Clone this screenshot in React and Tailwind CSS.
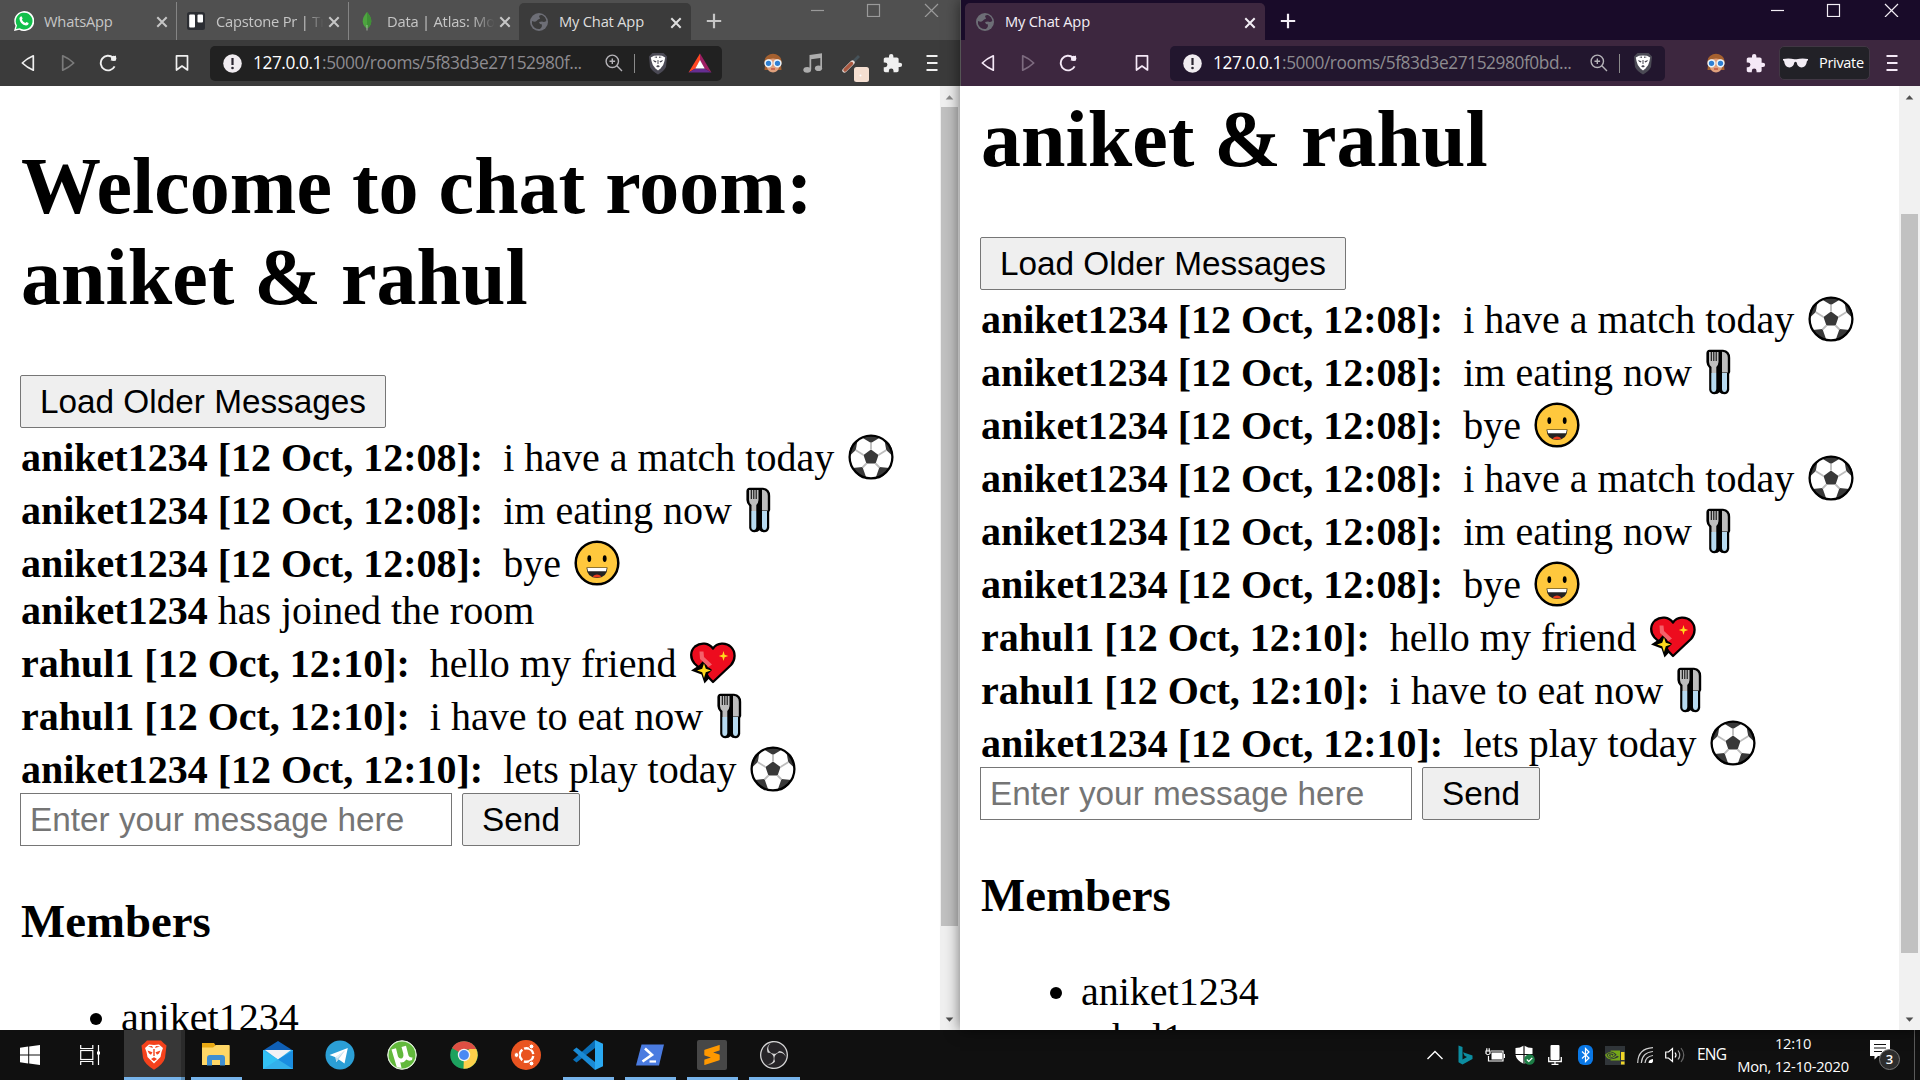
import React from "react";
import { SiNvidia, SiObsstudio, SiSublimetext } from "react-icons/si";

const ui = "font-['Open_Sans','Noto_Sans',sans-serif]";

/* ---------- message pictograms ---------- */

function Ball() {
  return (
    <svg className="ml-[4px] h-[46px] w-[46px]" viewBox="0 0 46 46">
      <circle cx="23" cy="23" r="21.5" fill="#fff" />
      <g fill="#383838">
        <path d="M23 15.5 L30.5 21 L27.6 29.5 H18.4 L15.5 21 Z" />
        <path d="M14 3.5 L23 9 L32 3.5 Q23 -.5 14 3.5Z" />
        <path d="M1.5 22 L7.8 16 L9.500 6 L5 9 Q1 15 1.5 22Z" />
        <path d="M44.5 22 L38.2 16 L36.500 6 L41 9 Q45 15 44.5 22Z" />
        <path d="M4.500 34 L14.5 33 L18 43 L15 44.500 Q8 41 4.500 34Z" />
        <path d="M41.500 34 L31.5 33 L28 43 L31 44.500 Q38 41 41.500 34Z" />
      </g>
      <g stroke="#bdbdbd" strokeWidth="1.8" fill="none">
        <path d="M23 15.5 V8.6 M30.5 21 L38.5 16 M27.6 29.5 L31.5 33.5 M18.4 29.5 L14.5 33.5 M15.5 21 L7.5 16" />
      </g>
      <circle cx="23" cy="23" r="21.4" fill="none" stroke="#000" strokeWidth="2.3" />
    </svg>
  );
}

function Fork() {
  return (
    <svg className="ml-[4px] h-[46px] w-[25px]" viewBox="0 0 25 46">
      <path d="M3.5 .8 H17 Q24.2 1.5 24.2 9 V23 L23.2 25 V41 Q22 45.3 18.5 45.3 Q15 45.3 13.5 43.3 Q12 45.3 8.5 45.3 Q4 45 3.2 41 V19 Q.4 16 .4 13 V4 Q.6 1 3.5 .8Z" fill="#000" />
      <path d="M3 3 H12.5 V13 Q12.3 16 10.3 18 V24 H5.5 V18 Q3 16 3 13Z" fill="#bdbdbd" />
      <path d="M5.3 2.5 V12 M7.8 2.5 V12 M10.2 2.5 V12" stroke="#000" strokeWidth="1" />
      <path d="M5.3 24 H10.3 V40 Q10 43 7.8 43 Q5.4 43 5.3 40Z" fill="#b7daf0" />
      <path d="M16 2.8 Q21.8 3 21.8 9 V23.5 H16Z" fill="#bdbdbd" />
      <path d="M16 24 H21 V40 Q20.6 43 18.5 43 Q16.2 43 16 40Z" fill="#b7daf0" />
    </svg>
  );
}

function Smile() {
  return (
    <svg className="ml-[3px] h-[46px] w-[46px]" viewBox="0 0 46 46">
      <circle cx="23" cy="23" r="21.3" fill="#ffc83d" stroke="#000" strokeWidth="2.5" />
      <ellipse cx="15.3" cy="18.6" rx="1.9" ry="3.4" />
      <ellipse cx="30.7" cy="18.6" rx="1.9" ry="3.4" />
      <path d="M12.5 27.5 H33.5 Q33 38 23 38 Q13 38 12.5 27.5Z" fill="#222" />
      <path d="M13.3 28 H32.7 L32 31.3 H14Z" fill="#fff" />
      <path d="M18.5 36.5 Q23 32.5 27.5 36.5 Q23 38.6 18.5 36.5Z" fill="#e63b1e" />
    </svg>
  );
}

function Heart() {
  return (
    <svg className="ml-[4px] h-[46px] w-[46px]" viewBox="0 0 46 46">
      <path d="M23 8.5 C27 2.5 36 2 41 7 C46 12 45.5 20 41 25 L23 42 L12.500 31 L4.500 23.500 C0 18.500 0 11 5 6.500 C11 1.800 19 3 23 8.500Z" fill="#ed0c1e" stroke="#000" strokeWidth="2.3" strokeLinejoin="round" />
      <path d="M1 30.500 L9.500 25 L14.500 19 L17.500 27 L25 30.500 L18 34 L19.500 38 L14.500 43.500 L11.500 34.500Z" fill="#000" />
      <path d="M16 24 L22 30 L18 34 L22 38 L30 32 L20 24Z" fill="#ed0c1e" />
      <path d="M14 23.500 L15.800 28.800 L21 30.500 L15.800 32.300 L14 38 L12.200 32.300 L7 30.500 L12.200 28.800Z" fill="#ffd91c" />
      <path d="M33.500 11 L34.600 14.700 L38.200 16 L34.600 17.200 L33.500 21 L32.400 17.200 L28.800 16 L32.400 14.700Z" fill="#ffd91c" />
      <path d="M9.500 11.500 L13.500 11.500 L14 17 L22 24.500 L18.500 27 L10 19Z" fill="#f4616a" />
    </svg>
  );
}

const EMOJI = { ball: Ball, fork: Fork, smile: Smile, heart: Heart };

/* ---------- chat page ---------- */

function Message({ user, time, text, emoji }) {
  if (!time) {
    return (
      <p className="h-[47px] pt-px pl-px leading-[46px] whitespace-pre">
        <b>{user}</b> {text}
      </p>
    );
  }
  const Icon = EMOJI[emoji];
  return (
    <div className="flex h-[53px] items-start pt-[6px] pl-px">
      <p className="pt-px leading-[46px] whitespace-pre">
        <b>{`${user} [${time}]:`}</b>
        {`\u00a0 ${text} `}
      </p>
      <Icon />
    </div>
  );
}

function ChatPage({ messages, members, scrolled }) {
  return (
    <div className="min-w-0 flex-1 overflow-hidden bg-white text-black font-['Liberation_Serif',serif] text-[40px]">
      <div className="px-5">
        {scrolled ? (
          <h1 className="h-[151px] pt-[8px] pl-px text-[80px] leading-[91px] font-bold">aniket &amp; rahul</h1>
        ) : (
          <h1 className="h-[289px] pt-[55px] pl-px text-[80px] leading-[91px] font-bold">
            Welcome to chat room: aniket &amp; rahul
          </h1>
        )}
        <button className="block h-[53px] w-[366px] rounded-[2px] border border-[#767676] bg-[#efefef] font-['Liberation_Sans',sans-serif] text-[33.33px] leading-[50px] whitespace-nowrap">
          Load Older Messages
        </button>
        {messages.map((m, i) => (
          <Message key={i} {...m} />
        ))}
        <div className="flex gap-[10px] font-['Liberation_Sans',sans-serif] text-[33.33px]">
          <input
            className="h-[53px] w-[432px] border border-[#767676] px-[9px] placeholder:text-[#757575] placeholder:opacity-100"
            placeholder="Enter your message here"
          />
          <button className="h-[53px] w-[118px] rounded-[2px] border border-[#767676] bg-[#efefef] leading-[50px]">Send</button>
        </div>
        <h3 className="mt-[48px] pl-px text-[46.8px] leading-[54px] font-bold">Members</h3>
        <ul className="mt-[47px] list-disc pl-[101px] leading-[46px]">
          {members.map((m) => (
            <li key={m}>{m}</li>
          ))}
        </ul>
      </div>
    </div>
  );
}

function Arrow({ up, color }) {
  return (
    <svg className="h-[21px] w-full shrink-0" viewBox="0 0 20 21" fill={color}>
      {up ? <path d="M5.500 14 L10 9 L14.500 14Z" /> : <path d="M5.500 8 L10 13 L14.500 8Z" />}
    </svg>
  );
}

/* ---------- browser chrome ---------- */

function Close() {
  return (
    <svg className="mt-[2px] h-[12px] w-[12px] shrink-0" viewBox="0 0 12 12" stroke="currentColor" strokeWidth="2">
      <path d="M1.300 1.300 L10.700 10.700 M10.700 1.300 L1.300 10.700" />
    </svg>
  );
}

function Globe({ land }) {
  return (
    <svg className="h-[18px] w-[18px]" viewBox="0 0 18 18">
      <circle cx="9" cy="9" r="9" fill="#6d6e76" />
      <path d="M2 8 Q5 9.500 6.500 8 Q8 6 10 5.800 L9 3 Q10 1.800 12 2 Q16 4 16.300 8 Q14 9.500 12 8.500 L9 9 Q9.500 11.500 12 11.500 Q12.500 14 10 16 Q4 16.500 2 11Z" fill={land} />
    </svg>
  );
}

function Trello() {
  return (
    <svg className="h-[18px] w-[18px]" viewBox="0 0 18 18">
      <rect width="18" height="18" rx="2.500" fill="#2c2e33" />
      <rect x="2.200" y="2.500" width="5.800" height="13" rx="1" fill="#fff" />
      <rect x="10.500" y="2.500" width="5.500" height="8" rx="1" fill="#fff" />
    </svg>
  );
}

function Leaf() {
  return (
    <svg className="h-[20px] w-[18px]" viewBox="0 0 18 20">
      <path d="M9 1 Q13.500 6 13.300 10.500 Q13 15 9 17.500 Q5 15 4.700 10.500 Q4.500 6 9 1Z" fill="#4da53f" />
      <path d="M9 1 Q13.500 6 13.300 10.500 Q13 15 9 17.500Z" fill="#3f9136" />
      <path d="M9 14 V19.500" stroke="#b7c9b2" strokeWidth=".8" />
    </svg>
  );
}

function Whatsapp() {
  return (
    <svg className="h-[20px] w-[20px]" viewBox="0 0 20 20">
      <path d="M0 20 L1.500 14.800 A10 10 0 1 1 5.300 18.700Z" fill="#fff" />
      <path d="M1.900 18.100 L3 14.500 A8.400 8.400 0 1 1 5.700 17.200Z" fill="#12c04b" />
      <path d="M6.800 5.500 Q7.500 5 8 6 L8.600 7.600 L7.900 8.800 Q9 11 11.300 11.900 L12.500 10.900 L14.600 12 Q14.700 14.400 12 14.500 Q6 13.500 5.400 7.500 Q5.600 6 6.800 5.500Z" fill="#fff" />
    </svg>
  );
}

function Plus() {
  return (
    <svg className="h-[16px] w-[16px]" viewBox="0 0 16 16" stroke="currentColor" strokeWidth="2.200">
      <path d="M8 .8 V15.200 M.8 8 H15.200" />
    </svg>
  );
}

function WindowButtons({ className }) {
  return (
    <div className={className}>
      <svg className="h-[14px] w-[130px]" viewBox="0 0 130 14" fill="none" stroke="currentColor" strokeWidth="1.200">
        <path d="M1 7.500 H14" />
        <rect x="57.500" y="1.500" width="12" height="12" />
        <path d="M115 1 L128 14 M128 1 L115 14" />
      </svg>
    </div>
  );
}

function Slot({ children, className = "w-10" }) {
  return <div className={`flex h-full shrink-0 items-center justify-center ${className}`}>{children}</div>;
}

function NavIcons() {
  return (
    <>
      <Slot>
        <svg className="h-[18px] w-[14px]" viewBox="0 0 14 18" fill="none" stroke="currentColor" strokeWidth="1.700" strokeLinejoin="round">
          <path d="M12.300 1.800 V16.200 Q6 13.500 1.300 9 Q6 4.500 12.300 1.800Z" />
        </svg>
      </Slot>
      <Slot>
        <svg className="h-[18px] w-[14px] opacity-35" viewBox="0 0 14 18" fill="none" stroke="currentColor" strokeWidth="1.700" strokeLinejoin="round">
          <path d="M1.700 1.800 V16.200 Q8 13.500 12.700 9 Q8 4.500 1.700 1.800Z" />
        </svg>
      </Slot>
      <Slot>
        <svg className="h-[18px] w-[18px]" viewBox="0 0 18 18" fill="none" stroke="currentColor" strokeWidth="1.900">
          <path d="M15.600 12.300 A7.300 7.300 0 1 1 14 3.700" />
          <path d="M11.500 6.500 H17 V1.500 L14 3 Z" fill="currentColor" stroke="none" />
          <circle cx="14.700" cy="4.300" r="2.600" fill="currentColor" stroke="none" />
        </svg>
      </Slot>
      <Slot className="ml-[34px] w-10">
        <svg className="h-[18px] w-[14px]" viewBox="0 0 14 18" fill="none" stroke="currentColor" strokeWidth="1.700">
          <path d="M1.500 1.800 H12.500 V16 L7 12 L1.500 16Z" strokeLinejoin="round" />
        </svg>
      </Slot>
    </>
  );
}

function Info() {
  return (
    <svg className="h-[19px] w-[19px] shrink-0" viewBox="0 0 19 19">
      <circle cx="9.500" cy="9.500" r="9.300" fill="#f0ecf0" />
      <path d="M9.500 4 V11" stroke="#2a2630" strokeWidth="2.200" />
      <circle cx="9.500" cy="14" r="1.300" fill="#2a2630" />
    </svg>
  );
}

function Magnifier() {
  return (
    <svg className="h-[18px] w-[18px]" viewBox="0 0 18 18" fill="none" stroke="#b5b3b8" strokeWidth="1.400">
      <circle cx="7.300" cy="7.300" r="6.200" />
      <path d="M11.800 11.800 L17 17 M7.300 4.500 V10.100 M4.500 7.300 H10.100" />
    </svg>
  );
}

function Shield() {
  return (
    <svg className="h-[23px] w-[20px]" viewBox="0 0 20 23">
      <path d="M4.500 1 L15.500 1 L19 4.500 L18 15 Q16 19 10 22.500 Q4 19 2 15 L1 4.500Z" fill="#4b4a55" />
      <path d="M10 3.500 L14 3.800 L17.200 5.500 L16.500 9 L15.200 13 L12.500 16.500 L10 18.500 L7.500 16.500 L4.800 13 L3.500 9 L2.800 5.500 L6 3.800Z" fill="#fff" />
      <path d="M5 8 L8.500 9.200 L7.800 10.500 L6 9.800Z M15 8 L11.500 9.200 L12.200 10.500 L14 9.800Z M8 14.200 L10 13 L12 14.200 L10 15.500Z M9.500 8 H10.500 V12 H9.500Z M6 5 L9 6 V4.500Z M14 5 L11 6 V4.500Z" fill="#4b4a55" />
    </svg>
  );
}

function Bat() {
  return (
    <svg className="h-[20px] w-[24px]" viewBox="0 0 24 20">
      <path d="M12 .5 L.5 19.500 L7.500 15.500 L12 7.500Z" fill="#ff4724" />
      <path d="M12 .5 L23.500 19.500 L16.500 15.500 L12 7.500Z" fill="#9e1f63" />
      <path d="M.5 19.500 H23.500 L16.500 15.500 H7.500Z" fill="#662d91" />
      <path d="M12 7 L7.300 15.500 H16.700Z" fill="#fff" />
    </svg>
  );
}

function Goggles() {
  return (
    <svg className="h-[20px] w-[20px]" viewBox="0 0 20 20">
      <path d="M2 12 Q0 6 4 3 Q10 -1.500 16 3 Q20 6 18 12 L18.500 17 H1.500Z" fill="#a5602f" />
      <path d="M3.500 7 Q10 4 16.500 7 V13 Q15 19.500 10 19.500 Q5 19.500 3.500 13Z" fill="#e0a07c" />
      <circle cx="5.500" cy="10.300" r="3.400" fill="#2d7fd3" stroke="#eaf4fb" strokeWidth="1.500" />
      <circle cx="14.500" cy="10.300" r="3.400" fill="#2d7fd3" stroke="#eaf4fb" strokeWidth="1.500" />
      <path d="M8 16 H12" stroke="#b74638" strokeWidth="1.200" />
    </svg>
  );
}

function Music() {
  return (
    <svg className="h-[20px] w-[20px]" viewBox="0 0 20 20" fill="#adadad">
      <path d="M6.500 2 L19 .3 V15 H17.300 V5 L8.200 6.200 V16.500 H6.500Z" />
      <ellipse cx="4.200" cy="16.800" rx="3.900" ry="2.900" />
      <ellipse cx="15.500" cy="15.200" rx="3.600" ry="2.800" />
    </svg>
  );
}

function Picker() {
  return (
    <svg className="mt-[9px] ml-[5px] h-[28px] w-[27px] shrink-0" viewBox="0 0 27 28">
      <path d="M10 9 L17 2" stroke="#46535a" strokeWidth="2.800" />
      <path d="M2.500 16.500 L10.500 8.500" stroke="#e9dcd6" strokeWidth="4.400" strokeLinecap="round" />
      <path d="M3 16 L9.500 9.500" stroke="#a9573f" strokeWidth="3.400" strokeLinecap="round" />
      <rect x="12" y="13" width="15" height="15" rx="2.500" fill="#f5dfd1" />
      <circle cx="18.500" cy="21.500" r="1" fill="#fff" />
    </svg>
  );
}

function Puzzle() {
  return (
    <svg className="h-[21px] w-[21px]" viewBox="0 0 24 24" fill="currentColor">
      <path d="M20.500 11H19V7c0-1.100-.9-2-2-2h-4V3.500a2.500 2.500 0 0 0-5 0V5H4c-1.100 0-2 .9-2 2v3.800h1.500a2.700 2.700 0 0 1 0 5.400H2V20c0 1.100.9 2 2 2h3.800v-1.500a2.700 2.700 0 0 1 5.400 0V22H17c1.100 0 2-.9 2-2v-4h1.500a2.500 2.500 0 0 0 0-5z" />
    </svg>
  );
}

function Menu() {
  return (
    <svg className="h-[16px] w-[12px]" viewBox="0 0 12 16" stroke="currentColor" strokeWidth="1.900">
      <path d="M.5 1 H11.500 M1 8 H11.500 M.5 15 H11.500" />
    </svg>
  );
}

function Omnibox({ className, rest, children }) {
  return (
    <div className={`flex h-[35px] shrink-0 items-center rounded-[5px] ${className}`}>
      <Info />
      <p className="ml-[11px] w-[341px] shrink-0 text-[17.300px] tracking-[-0.430px] whitespace-nowrap text-[#8d8b90]">
        <span className="text-white">127.0.0.1</span>
        {rest}
      </p>
      {children}
    </div>
  );
}

function Tab({ icon, title, className }) {
  return (
    <div className={`flex shrink-0 items-center ${className}`}>
      <span className="flex w-5 justify-center">{icon}</span>
      <p className="ml-[10px] min-w-0 flex-1 overflow-hidden text-[14.700px] tracking-[-0.200px] whitespace-nowrap">{title}</p>
      <Close />
    </div>
  );
}

const leftMessages = [
  { user: "aniket1234", time: "12 Oct, 12:08", text: "i have a match today", emoji: "ball" },
  { user: "aniket1234", time: "12 Oct, 12:08", text: "im eating now", emoji: "fork" },
  { user: "aniket1234", time: "12 Oct, 12:08", text: "bye", emoji: "smile" },
  { user: "aniket1234", text: "has joined the room" },
  { user: "rahul1", time: "12 Oct, 12:10", text: "hello my friend", emoji: "heart" },
  { user: "rahul1", time: "12 Oct, 12:10", text: "i have to eat now", emoji: "fork" },
  { user: "aniket1234", time: "12 Oct, 12:10", text: "lets play today", emoji: "ball" },
];

const rightMessages = [
  ...leftMessages.slice(0, 3),
  ...leftMessages.slice(0, 3),
  ...leftMessages.slice(4),
];

function LeftWindow() {
  return (
    <section className="flex h-full w-[960px] flex-col overflow-hidden">
      <div className={`flex h-10 shrink-0 bg-[#505050] text-[#c6c6c6] ${ui}`}>
        <Tab className="mt-[2px] ml-[5px] w-[172px] border-r border-[#858585] pr-[8px] pl-[9px]" icon={<Whatsapp />} title="WhatsApp" />
        <Tab
          className="mt-[2px] w-[172px] border-r border-[#858585] pr-[8px] pl-[9px]"
          icon={<Trello />}
          title={<span className="block [mask-image:linear-gradient(to_right,black_80%,transparent_96%)]">Capstone Pr | Tr</span>}
        />
        <Tab
          className="mt-[2px] w-[170px] pr-[8px] pl-[8px]"
          icon={<Leaf />}
          title={<span className="block [mask-image:linear-gradient(to_right,black_76%,transparent_96%)]">Data | Atlas: Mo</span>}
        />
        <Tab className="mt-[3px] w-[172px] rounded-t-[5px] bg-[#3b3b3b] pr-[9px] pl-[10px] text-[#dedede]" icon={<Globe land="#3b3b3b" />} title="My Chat App" />
        <div className="flex w-[45px] items-center justify-center pt-[2px]"><Plus /></div>
        <WindowButtons className="ml-[74px] pt-[3px] text-[#9a9a9a]" />
      </div>
      <div className={`flex h-[46px] shrink-0 items-center bg-[#3b3b3b] pl-2 text-[#f0f0f0] ${ui}`}>
        <NavIcons />
        <Omnibox className="ml-2 w-[512px] bg-[#212121] pl-[13px]" rest=":5000/rooms/5f83d3e27152980f...">
          <Slot className="w-10"><Magnifier /></Slot>
          <span className="h-[19px] w-px bg-[#8a8a8a]" />
          <Slot className="ml-[3px] w-10"><Shield /></Slot>
          <Slot className="ml-[2px] w-10"><Bat /></Slot>
        </Omnibox>
        <Slot className="ml-[31px] w-10"><Goggles /></Slot>
        <Slot><Music /></Slot>
        <Slot><Picker /></Slot>
        <Slot className="w-[39px]"><Puzzle /></Slot>
        <Slot className="w-[40px]"><Menu /></Slot>
      </div>
      <div className="flex min-h-0 flex-1">
        <ChatPage messages={leftMessages} members={["aniket1234"]} />
        <div className="flex w-5 shrink-0 flex-col bg-[#f0f0f0] pr-[2px] pl-px">
          <Arrow up color="#8b8b8b" />
          <div className="h-[819px] shrink-0 bg-[#c1c1c1]" />
          <div className="flex-1" />
          <Arrow color="#505050" />
        </div>
      </div>
    </section>
  );
}

function RightWindow() {
  return (
    <section className="relative flex h-full w-[960px] flex-col border-l border-[#555] shadow-[0_0_14px_rgba(0,0,0,0.55)]">
      <div className={`flex h-10 shrink-0 bg-[#190b29] text-[#f3eef5] ${ui}`}>
        <Tab className="mt-[3px] ml-[4px] w-[300px] rounded-t-[5px] bg-[#3d273f] pr-[9px] pl-[10px]" icon={<Globe land="#3d273f" />} title="My Chat App" />
        <div className="flex w-[45px] items-center justify-center pt-[2px]"><Plus /></div>
        <WindowButtons className="ml-[460px] pt-[3px]" />
      </div>
      <div className={`flex h-[46px] shrink-0 items-center bg-[#3d273f] pl-[7px] text-[#f5e9f7] ${ui}`}>
        <NavIcons />
        <Omnibox className="ml-2 w-[495px] bg-[#22162e] pl-[13px]" rest=":5000/rooms/5f83d3e27152980f0bd...">
          <Slot className="ml-[25px] w-10"><Magnifier /></Slot>
          <span className="h-[19px] w-px bg-[#8a8a8a]" />
          <Slot className="ml-[3px] w-10"><Shield /></Slot>
        </Omnibox>
        <Slot className="ml-[31px] w-10"><Goggles /></Slot>
        <Slot className="w-[39px]"><Puzzle /></Slot>
        <div className="ml-1 flex h-[34px] w-[91px] shrink-0 items-center rounded-[5px] border border-[#413744] bg-[#222127] pl-[3px]">
          <svg className="h-[10px] w-[25px]" viewBox="0 0 25 10" fill="#f3edf5">
            <path d="M0 1 Q6 -.3 11.500 1.300 H13.500 Q19 -.3 25 1 V2.200 L24 3 Q23 9.500 18.500 9.500 Q14.500 9.200 13.700 4.500 Q12.500 3 11.300 4.500 Q10.500 9.200 6.500 9.500 Q2 9.500 1 3 L0 2.200Z" />
          </svg>
          <span className="ml-[11px] text-[14.500px] tracking-[-0.300px] text-white">Private</span>
        </div>
        <Slot className="w-[44px]"><Menu /></Slot>
      </div>
      <div className="flex min-h-0 flex-1">
        <div className="-ml-px flex min-w-0 flex-1 border-l border-[#777]">
          <div className="-ml-px flex min-w-0 flex-1">
            <ChatPage messages={rightMessages} members={["aniket1234", "rahul1"]} scrolled />
          </div>
        </div>
        <div className="flex w-[21px] shrink-0 flex-col bg-[#f1f1f1] px-[2px]">
          <Arrow up color="#505050" />
          <div className="flex-1" />
          <div className="mb-[56px] h-[739px] shrink-0 bg-[#c1c1c1]" />
          <Arrow color="#505050" />
        </div>
      </div>
    </section>
  );
}

/* ---------- taskbar ---------- */

function App30({ children }) {
  return <svg className="h-[30px] w-[30px]" viewBox="0 0 30 30">{children}</svg>;
}

const startIcon = (
  <svg className="h-[20px] w-[20px]" viewBox="0 0 20 20" fill="#fff">
    <path d="M0 2.800 L8.200 1.600 V9.500 H0Z M9.200 1.400 L20 0 V9.500 H9.200Z M0 10.500 H8.200 V18.400 L0 17.200Z M9.200 10.500 H20 V20 L9.200 18.600Z" />
  </svg>
);

const taskViewIcon = (
  <svg className="h-[20px] w-[20px]" viewBox="0 0 20 20" fill="none" stroke="#fff" strokeWidth="1.200">
    <path d="M.7 0 V3.500 H12.800 V0 M.7 20 V16.500 H12.800 V20" />
    <rect x=".7" y="5.500" width="12.100" height="9" />
    <path d="M18.500 0 V20" />
    <rect x="17" y="6.500" width="3" height="3" fill="#fff" stroke="none" />
  </svg>
);

const explorer = (
  <App30>
    <path d="M1 3 H13 L15 6 H28.500 V25 H1Z" fill="#e9a913" />
    <path d="M1 7.500 H12 L15 5 H28.500 V25 H1Z" fill="#ffd766" />
    <path d="M6 25.500 V18 Q6 15 9 15 H21 Q24 15 24 18 V25.500 H19 V20 H11 V25.500Z" fill="#3f8fd2" />
  </App30>
);

const mail = (
  <App30>
    <path d="M0 10.500 L15 1 L30 10.500Z" fill="#0f5fb5" />
    <path d="M0 10 H30 V29 H0Z" fill="#33b0ea" />
    <path d="M2 10 H28 L15 19.500Z" fill="#f2f2f5" />
    <path d="M0 10.500 L15 19.500 L0 29Z" fill="#32c1f3" />
    <path d="M30 10.500 L15 19.500 L30 29Z" fill="#1a8de0" />
  </App30>
);

const telegram = (
  <App30>
    <circle cx="15" cy="15" r="14.500" fill="#2b9fd6" />
    <path d="M4.500 15 L22.800 8 L19.500 23.500 L13.500 19.200 L11.300 22 L10.500 17.300Z" fill="#fff" />
    <path d="M10.500 17.300 L20 10.500 L13.500 19.200 L11.300 22Z" fill="#b9d9ea" />
    <path d="M10.500 17.300 L20 10.500 L12.500 18.200Z" fill="#e4f1f8" />
  </App30>
);

const utorrent = (
  <App30>
    <circle cx="15" cy="15" r="14.300" fill="#fff" stroke="#dff0d8" strokeWidth="1" />
    <path d="M15 1.500 A13.500 13.500 0 1 0 28.500 15 A13.500 13.500 0 0 0 15 1.500Z" fill="#62b93c" />
    <path d="M4.500 9.500 L9 8.300 L11 16.500 Q12.500 19.500 15.500 18 Q17 16.500 16.300 13.500 L14.500 7 L19 5.800 L21.500 15.500 Q22.500 18 25.500 17.500 L25 20 Q21.500 21.500 19.500 19.500 Q17 23 13.300 22.300 L14.500 28 L9.800 27.300Z" fill="#fff" />
  </App30>
);

const chrome = (
  <App30>
    <circle cx="15" cy="15" r="13.800" fill="#1da25f" />
    <path d="M15 15 L3 8 A13.800 13.800 0 0 1 27.500 9.500 H15Z" fill="#dd4f43" />
    <path d="M15 15 L20.500 9 H27.300 A13.800 13.800 0 0 1 14.500 28.800Z" fill="#fdd04b" />
    <circle cx="15" cy="15" r="6.200" fill="#f4f4f4" />
    <circle cx="15" cy="15" r="4.900" fill="#4a8af4" />
  </App30>
);

const ubuntu = (
  <App30>
    <circle cx="15" cy="15" r="15" fill="#e95420" />
    <circle cx="15.500" cy="15" r="6.800" fill="none" stroke="#fff" strokeWidth="2.400" strokeDasharray="12.200 2" strokeDashoffset="-1" />
    <circle cx="5.500" cy="15" r="2.400" fill="#fff" stroke="#e95420" />
    <circle cx="20.500" cy="6.500" r="2.400" fill="#fff" stroke="#e95420" />
    <circle cx="20.500" cy="23.500" r="2.400" fill="#fff" stroke="#e95420" />
  </App30>
);

const vscode = (
  <App30>
    <path d="M22 0 L30 3.800 V26.200 L22 30Z" fill="#2aa9f2" />
    <path d="M22 0 V8 L3.500 22.500 L0 19.800Z" fill="#0a6fb8" />
    <path d="M22 30 V22 L3.500 7.500 L0 10.200Z" fill="#1a8bd6" />
  </App30>
);

const powershell = (
  <App30>
    <path d="M6.500 4.500 H29 L24 25.500 H1Z" fill="#4a7be0" />
    <path d="M10 8.500 L17 14.800 L7.500 21.500" fill="none" stroke="#fff" strokeWidth="2.600" />
    <path d="M14.500 21.500 H21" stroke="#fff" strokeWidth="2.200" />
  </App30>
);

const brave = (
  <svg className="h-[30px] w-[26px]" viewBox="0 0 26 30">
    <path d="M6 .5 H20 L22.500 3 L25.500 5.500 L24 18 Q22.500 24 13 29.700 Q3.500 24 2 18 L.5 5.500 L3.500 3Z" fill="#f4421c" />
    <path d="M13 5 L18 4.500 L22 8 L20.500 12 L19.500 17 L16 20.500 L13 23.500 L10 20.500 L6.500 17 L5.500 12 L4 8 L8 4.500Z" fill="#fff" />
    <path d="M6.500 10.500 L11.500 12.200 L10 14.800 L8 13.500Z M19.500 10.500 L14.500 12.200 L16 14.800 L18 13.500Z M10 19 L13 17.300 L16 19 L13 21.200Z M12.300 9 H13.700 V16 H12.300Z M7 6.500 L12 8 L11 6Z M19 6.500 L14 8 L15 6Z" fill="#f4421c" />
  </svg>
);

const sublime = (
  <div className="flex h-[30px] w-[30px] items-center justify-center rounded-[2px] bg-[#474747]">
    <SiSublimetext className="h-[20px] w-[20px] text-[#ff9800]" />
  </div>
);

const obs = (
  <div className="flex h-[28px] w-[28px] items-center justify-center rounded-full bg-[#262427]">
    <SiObsstudio className="h-[28px] w-[28px] text-[#d5d5d5]" />
  </div>
);

const apps = [
  { icon: brave, active: true, line: true },
  { icon: explorer, line: true },
  { icon: mail },
  { icon: telegram },
  { icon: utorrent },
  { icon: chrome },
  { icon: ubuntu },
  { icon: vscode, line: true },
  { icon: powershell, line: true },
  { icon: sublime, line: true },
  { icon: obs, line: true },
];

function Taskbar() {
  return (
    <footer className={`flex h-[50px] w-full shrink-0 items-center bg-[#101010] text-white ${ui}`}>
      <Slot className="w-[60px]">{startIcon}</Slot>
      <Slot className="mr-[3px] w-[60px]">{taskViewIcon}</Slot>
      {apps.map((a, i) => (
        <div key={i} className="flex h-full w-[62px] shrink-0 flex-col items-center">
          <div className={a.active ? "flex h-[47px] w-[61px] items-center justify-center bg-[#373737] pt-[3px] shadow-[inset_-4px_0_0_#2b2b2b]" : "flex h-[47px] items-center justify-center pt-[3px]"}>
            {a.icon}
          </div>
          {a.line && <div className={a.active ? "h-[3px] w-[61px] border-r-4 border-[#5a8cb5] bg-[#76b3ea]" : "h-[3px] w-[51px] bg-[#76b3ea]"} />}
        </div>
      ))}
      <div className="flex h-full flex-1 items-center justify-end">
        <Slot className="w-[30px]">
          <svg className="h-[10px] w-[16px]" viewBox="0 0 16 10" fill="none" stroke="#fff" strokeWidth="1.400"><path d="M.5 9 L8 1.500 L15.500 9" /></svg>
        </Slot>
        <Slot className="w-[30px]">
          <svg className="h-[20px] w-[15px]" viewBox="0 0 15 20" fill="#0c8da0"><path d="M.5 .5 L4.500 2 V14.500 L9 12 L6.500 10.800 L5 7.200 L14.500 10.500 V14 L4.500 19.500 L.5 17.200Z" /></svg>
        </Slot>
        <Slot className="w-[30px]">
          <svg className="h-[14px] w-[20px]" viewBox="0 0 20 14" fill="none" stroke="#fff" strokeWidth="1.200">
            <path d="M6 3 H18 V13 H3.500 V8" /><path d="M19.500 6 V10" />
            <rect x="6.500" y="4.500" width="10.500" height="7" fill="#fff" stroke="none" />
            <path d="M1 3 V5.500 Q3 8 5 5.500 V3Z M1.800 3 V.3 M4.200 3 V.3" />
          </svg>
        </Slot>
        <Slot className="w-[30px]">
          <svg className="h-[20px] w-[20px]" viewBox="0 0 20 20">
            <path d="M9 .5 Q13 3 17.500 3 V10 Q16 16 9 19 Q1.500 15.500 .5 10 V3 Q5 3 9 .5Z" fill="#fff" />
            <path d="M9 0 V19 M0 9.500 H18" stroke="#101010" strokeWidth="1.200" />
            <circle cx="14.500" cy="14.500" r="5.300" fill="#1c7d45" />
            <path d="M11.800 14.500 L13.800 16.500 L17.300 12.800" fill="none" stroke="#fff" strokeWidth="1.200" />
          </svg>
        </Slot>
        <Slot className="w-[30px]">
          <svg className="h-[20px] w-[14px]" viewBox="0 0 14 20">
            <rect x="2.500" y="0" width="9" height="15" rx="1" fill="#fff" />
            <path d="M.7 12 V16.500 H13.300 V12 M7 16.500 V19 M3.500 19.300 H10.500" stroke="#fff" strokeWidth="1.300" fill="none" />
          </svg>
        </Slot>
        <Slot className="w-[30px]">
          <svg className="h-[20px] w-[15px]" viewBox="0 0 15 20">
            <rect width="15" height="20" rx="6" fill="#0a78e6" />
            <path d="M4 6.500 L11 13 L7.500 16.500 V3.500 L11 7 L4 13.500" stroke="#fff" strokeWidth="1.200" fill="none" />
          </svg>
        </Slot>
        <Slot className="w-[30px]">
          <div className="flex h-[19px] w-[20px] items-center bg-[#31363a]">
            <SiNvidia className="h-[15px] w-[15px] text-[#76a818]" />
            <svg className="h-full w-[5px]" viewBox="0 0 5 19" fill="#f1d526"><path d="M1 6 H4.500 V14 H1Z M1 15.500 H4.500 V18.500 H1Z" /></svg>
          </div>
        </Slot>
        <Slot className="w-[30px]">
          <svg className="h-[16px] w-[16px]" viewBox="0 0 16 16" fill="none" stroke="#cfcfcf" strokeWidth="1.200">
            <path d="M.7 16 Q1 1.500 16 .7 M4.300 16 Q5 5.500 16 4.500 M8 16 Q8.500 9.500 16 8.500" />
            <path d="M11.500 16 Q11.500 12.500 16 12 V14.500 L15 16Z" fill="#fff" stroke="none" />
          </svg>
        </Slot>
        <Slot className="w-[30px]">
          <svg className="h-[18px] w-[21px]" viewBox="0 0 21 18" fill="none" stroke="#fff" strokeWidth="1.200">
            <path d="M.7 6 H3.500 L7.500 2.500 V15.500 L3.500 12 H.7Z" /><path d="M10 6.500 Q12 9 10 11.500" />
            <path d="M13 4.500 Q16.500 9 13 13.500" stroke="#aaa" /><path d="M16 2 Q21.500 9 16 16" stroke="#666" />
          </svg>
        </Slot>
        <span className="ml-[7px] w-[32px] text-[15.500px] tracking-[-0.800px]">ENG</span>
        <div className="ml-[5px] w-[118px] text-center text-[14.700px] leading-[23px] tracking-[-0.250px] whitespace-nowrap">
          <p>12:10</p>
          <p>Mon, 12-10-2020</p>
        </div>
        <div className="relative ml-[18px] h-[30px] w-[30px]">
          <svg className="h-[20px] w-[20px]" viewBox="0 0 20 20">
            <path d="M0 0 H20 V16 H8 L4.500 19.500 V16 H0Z" fill="#fff" />
            <path d="M4 4.500 H16 M4 8 H16 M4 11.500 H12" stroke="#101010" strokeWidth="1.200" />
          </svg>
          <span className="absolute top-[9px] left-[9px] flex h-[21px] w-[21px] items-center justify-center rounded-full border border-[#777] bg-[#2d2d2d] text-[13px] font-semibold">3</span>
        </div>
        <div className="ml-[14px] h-full w-[6px] border-l border-[#5a5a5a]" />
      </div>
    </footer>
  );
}

export default function App() {
  return (
    <main className="flex h-[1080px] w-[1920px] flex-col overflow-hidden bg-black">
      <div className="flex h-[1030px] shrink-0">
        <LeftWindow />
        <RightWindow />
      </div>
      <Taskbar />
    </main>
  );
}
